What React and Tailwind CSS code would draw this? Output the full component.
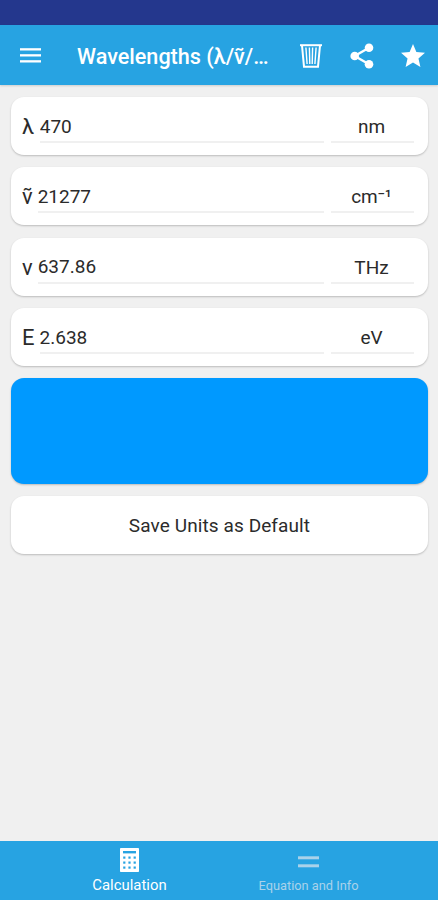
import React, { useState } from 'react';

const initialRows = [
  { symbol: 'λ', value: '470', unit: 'nm', inputClass: 'ml-[5.5px]' },
  { symbol: 'ṽ', value: '21277', unit: 'cm⁻¹', inputClass: 'ml-[5px]' },
  { symbol: 'v', value: '637.86', unit: 'THz', inputClass: 'ml-[5px]' },
  { symbol: 'E', value: '2.638', unit: 'eV', inputClass: 'ml-[5px]' },
];

const cardClass = 'rounded-[13px] bg-white shadow-[0_1px_2px_rgba(0,0,0,0.22)]';

const MenuIcon = () => (
  <svg className="h-[15px] w-[21px]" viewBox="0 0 21 15" fill="#fff">
    <rect x="0" y="0.2" width="21" height="2.3" />
    <rect x="0" y="6.2" width="21" height="2.3" />
    <rect x="0" y="12.2" width="21" height="2.3" />
  </svg>
);

const TrashIcon = () => (
  <svg className="h-6 w-[22px]" viewBox="0 0 22 24" fill="none" stroke="#fff">
    <path d="M0 1.2h22" strokeWidth="2" />
    <path d="M2 1.5l2 21.2h14l2-21.2" strokeWidth="2" />
    <path d="M5.9 3.5l1.2 16.5M9.4 3.5l.4 16.5M12.6 3.5l-.4 16.5M16.1 3.5l-1.2 16.5" strokeWidth="1.4" />
  </svg>
);

const ShareIcon = () => (
  <svg className="h-[26px] w-6" viewBox="0 0 24 26" fill="#fff">
    <path d="M19 4.8L4.7 13 19 21.2" fill="none" stroke="#fff" strokeWidth="2.4" />
    <circle cx="19" cy="4.7" r="4.3" />
    <circle cx="4.7" cy="13" r="4.3" />
    <circle cx="19" cy="21.3" r="4.3" />
  </svg>
);

const StarIcon = () => (
  <svg className="h-[23px] w-6" viewBox="2 2 20 19" fill="#fff">
    <path d="M12 17.27L18.18 21l-1.64-7.03L22 9.24l-7.19-.61L12 2 9.19 8.63 2 9.24l5.46 4.73L5.82 21z" />
  </svg>
);

const CalculatorIcon = () => (
  <svg className="h-6 w-[19px]" viewBox="0 0 19 24">
    <rect width="19" height="24" rx="0.8" fill="#fff" />
    <g fill="#27a3e2">
      <rect x="3" y="3" width="13" height="2.4" />
      {[8.5, 13.5, 18.5].map((y) =>
        [3.2, 8.4, 13.6].map((x) => (
          <rect key={`${x}-${y}`} x={x} y={y} width="2.2" height="2.2" />
        ))
      )}
    </g>
  </svg>
);

const EqualsIcon = () => (
  <svg className="h-3 w-[21px]" viewBox="0 0 21 12" fill="#a9d2ea">
    <rect x="0" y="0.3" width="21" height="3" />
    <rect x="0" y="8.3" width="21" height="3" />
  </svg>
);

const App = () => {
  const [rows, setRows] = useState(initialRows);

  const updateRow = (index, value) => {
    setRows(rows.map((row, i) => (i === index ? { ...row, value } : row)));
  };

  return (
    <div className="flex h-[900px] w-[438px] flex-col overflow-hidden bg-[#f0f0f0] font-['Roboto','Noto_Sans',sans-serif] text-[#2b2b2b]">
      {/* Status bar */}
      <div className="h-[25px] shrink-0 bg-[#24378d]" />

      {/* App bar */}
      <header className="flex h-[60px] shrink-0 items-center bg-[#27a3e2] pl-5 text-white shadow-[0_1px_2px_rgba(0,0,0,0.15)]">
        <button aria-label="Menu"><MenuIcon /></button>
        <h1 className="ml-9 w-[223px] whitespace-nowrap pt-[3px] text-[21.6px] font-medium leading-[57px]">
          Wavelengths (λ/ṽ/…
        </h1>
        <button aria-label="Delete" className="pt-px"><TrashIcon /></button>
        <button aria-label="Share" className="ml-[28px] pt-px"><ShareIcon /></button>
        <button aria-label="Favorite" className="ml-[27px]"><StarIcon /></button>
      </header>

      <main className="flex flex-1 flex-col gap-[12.4px] pl-[11px] pr-[10px] pt-3">
        {/* Inputs */}
        {rows.map((row, index) => (
          <div key={row.symbol} className={`${cardClass} flex h-[58px] shrink-0 items-start pl-[11px] pr-[14px] pt-[13px]`}>
            <span className="text-[22px] leading-[33px]">{row.symbol}</span>
            <input
              className={`${row.inputClass} h-[33px] min-w-0 flex-1 border-b-2 border-[#f0f0f0] pt-px text-[19px] leading-[30px] outline-none`}
              value={row.value}
              onChange={(e) => updateRow(index, e.target.value)}
            />
            <span className="ml-[7px] h-[33px] w-[83px] border-b-2 border-[#f0f0f0] pr-[2px] text-center text-[19px] leading-[33px]">
              {row.unit}
            </span>
          </div>
        ))}

        {/* Color preview */}
        <div className="-mt-[0.6px] h-[106px] shrink-0 rounded-[13px] bg-[#0099ff] shadow-[0_1px_2px_rgba(0,0,0,0.22)]" />

        <button className={`${cardClass} h-[58px] shrink-0 pt-[2px] text-[19px] tracking-[0.1px]`}>
          Save Units as Default
        </button>
      </main>

      {/* Bottom navigation */}
      <nav className="flex h-[59px] shrink-0 bg-[#27a3e2] px-10">
        <button className="flex w-[179px] flex-col items-center pt-[7px] text-[14.9px] leading-[18px] text-white">
          <CalculatorIcon />
          <span className="mt-1">Calculation</span>
        </button>
        <button className="flex w-[179px] flex-col items-center pt-[15px] text-[12.8px] leading-[18px] text-[#a9d2ea]">
          <EqualsIcon />
          <span className="mt-[9px]">Equation and Info</span>
        </button>
      </nav>
    </div>
  );
};

export default App;
